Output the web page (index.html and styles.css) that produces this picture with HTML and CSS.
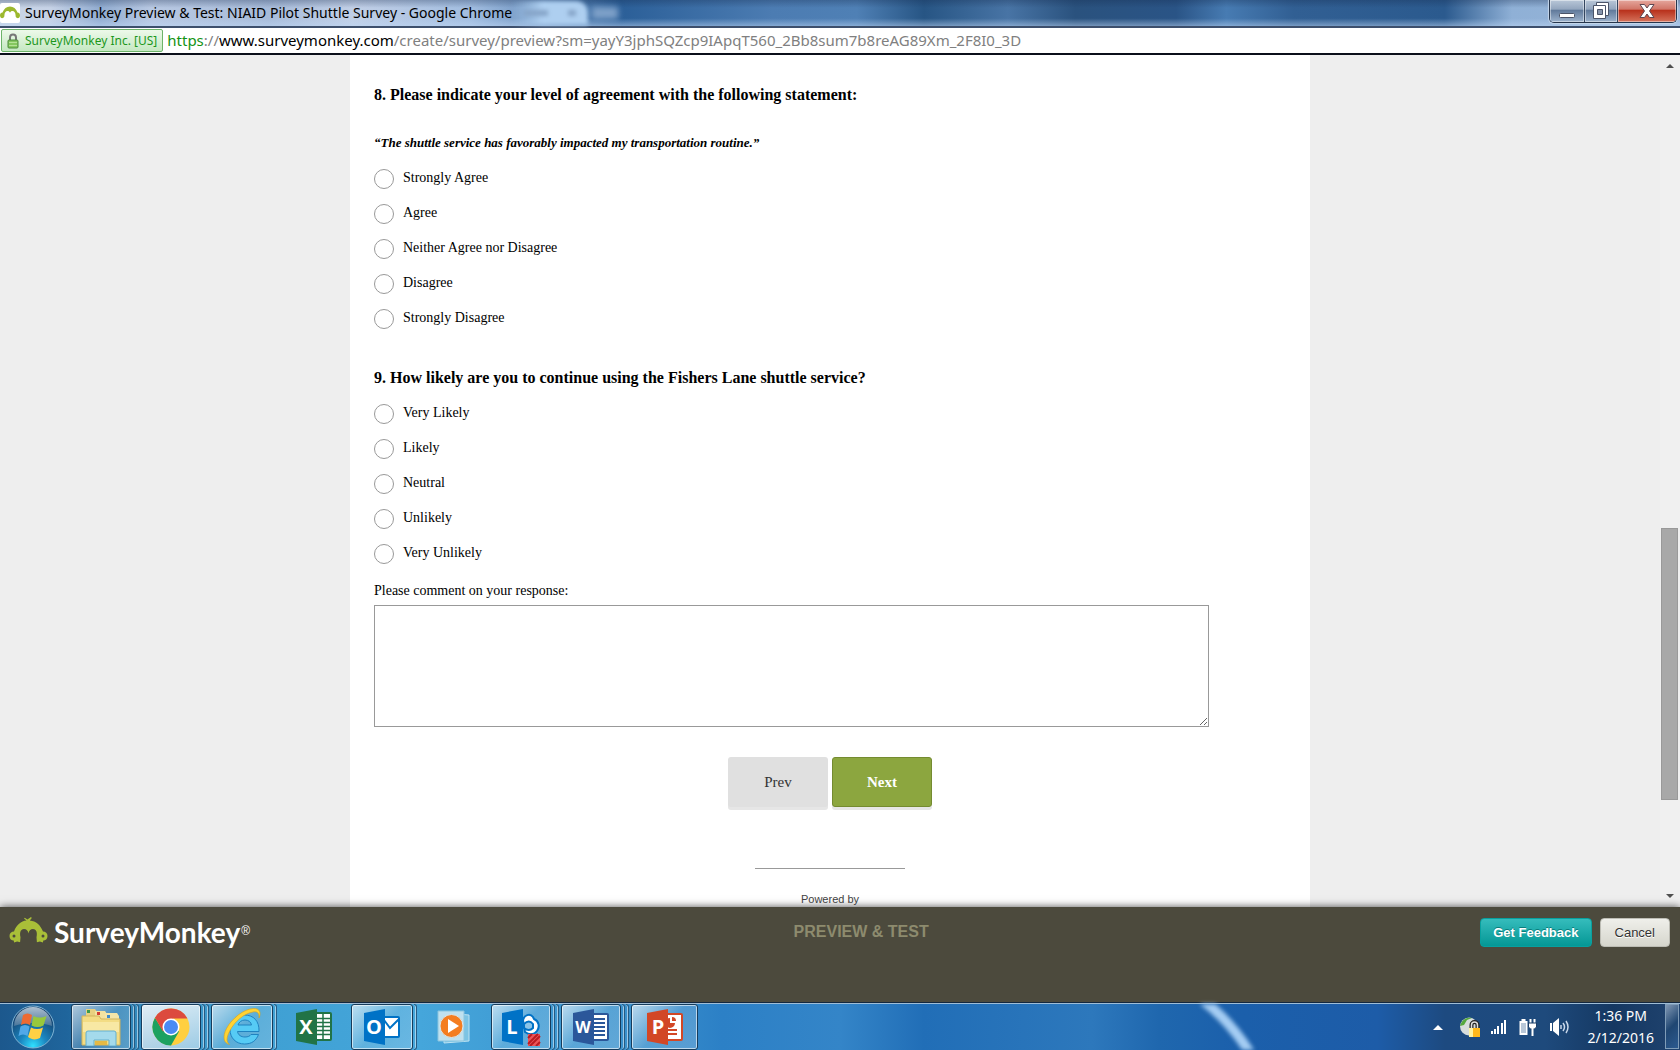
FILE: index.html
```
<!DOCTYPE html>
<html lang="en">
<head>
<meta charset="utf-8">
<title>SurveyMonkey Preview &amp; Test: NIAID Pilot Shuttle Survey</title>
<link rel="stylesheet" href="styles.css">
</head>
<body>

<!-- window title -->
<header class="titlebar">
	<svg class="favicon" width="20" height="20" viewBox="0 0 20 20"><rect width="20" height="20" rx="2" fill="#fff"/><path d="M0 12.500c0-2 1-3 2.500-3C4 5.500 6.500 3.500 10 3.500s6 2 7.500 6c1.500 0 2.500 1 2.500 3s-1.500 3-3 2.500c-1-.3-1.500-1.500-1.400-2.500C15.500 9.500 14.300 8 12.500 8c-1.300 0-2 .7-2.500 1.700C9.500 8.700 8.800 8 7.500 8 5.700 8 4.500 9.500 4.400 12.500c.1 1-.4 2.200-1.400 2.500-1.500.5-3-.5-3-2.500z" fill="#9cb82e"/></svg>
	<span class="titlebar-text">SurveyMonkey Preview &amp; Test: NIAID Pilot Shuttle Survey - Google Chrome</span>
	<div class="glass-tab"><i></i><i></i></div>
	<div class="glass-newtab"></div>
	<div class="window-buttons">
		<button class="win-btn win-min" aria-label="Minimize"><svg width="18" height="22" viewBox="0 0 18 22"><rect x="1.500" y="13.500" width="15" height="4" rx="1" fill="#fff" stroke="#4b5468"/></svg></button>
		<button class="win-btn win-max" aria-label="Restore"><svg width="20" height="22" viewBox="0 0 20 22"><path d="M5.500 2.500h12v13h-12z" fill="#fff" stroke="#4b5468"/><path d="M2.500 5.500h12v13h-12z" fill="#fff" stroke="#4b5468"/><path d="M6.500 9.500h5v5h-5z" fill="#8593aa" stroke="#4b5468"/></svg></button>
		<button class="win-btn win-close" aria-label="Close"><svg width="18" height="22" viewBox="0 0 18 22"><path d="M2 4.500h4.500L9 8l2.500-3.500H16L11.500 11l4.500 6.500h-4.500L9 14l-2.500 3.500H2L6.500 11z" fill="#fff" stroke="#5d4650"/></svg></button>
	</div>
</header>

<!-- address -->
<div class="addressbar">
	<button class="site-chip">
		<svg width="12" height="16" viewBox="0 0 12 16"><path d="M3 8V4.500a3 3 0 0 1 6 0V8" fill="none" stroke="#777" stroke-width="2"/><rect x="1" y="7" width="10" height="8" rx="1" fill="#85c75f" stroke="#4d8a3c"/><path d="M2 9.500h8M2 12.500h8" stroke="#b5e296"/></svg>
		SurveyMonkey Inc. [US]
	</button>
	<a class="url" href="#"><span class="url-scheme">https</span>://<span class="url-host">www.surveymonkey.com</span>/create/survey/preview?sm=yayY3jphSQZcp9IApqT560_2Bb8sum7b8reAG89Xm_2F8I0_3D</a>
</div>

<div class="viewport">
	<main class="survey">
		<form class="survey-page">
			<fieldset class="question">
				<legend class="question-title">8. Please indicate your level of agreement with the following statement:</legend>
				<p class="question-quote">“The shuttle service has favorably impacted my transportation routine.”</p>
				<div class="options">
					<label class="option"><input type="radio" name="q8"><span>Strongly Agree</span></label>
					<label class="option"><input type="radio" name="q8"><span>Agree</span></label>
					<label class="option"><input type="radio" name="q8"><span>Neither Agree nor Disagree</span></label>
					<label class="option"><input type="radio" name="q8"><span>Disagree</span></label>
					<label class="option"><input type="radio" name="q8"><span>Strongly Disagree</span></label>
				</div>
			</fieldset>
			<fieldset class="question">
				<legend class="question-title">9. How likely are you to continue using the Fishers Lane shuttle service?</legend>
				<div class="options">
					<label class="option"><input type="radio" name="q9"><span>Very Likely</span></label>
					<label class="option"><input type="radio" name="q9"><span>Likely</span></label>
					<label class="option"><input type="radio" name="q9"><span>Neutral</span></label>
					<label class="option"><input type="radio" name="q9"><span>Unlikely</span></label>
					<label class="option"><input type="radio" name="q9"><span>Very Unlikely</span></label>
				</div>
				<label class="comment-label" for="q9-comment">Please comment on your response:</label>
				<textarea class="comment" id="q9-comment"></textarea>
			</fieldset>
			<div class="survey-nav">
				<button type="button" class="btn-prev">Prev</button>
				<button type="button" class="btn-next">Next</button>
			</div>
			<footer class="powered">Powered by</footer>
		</form>
	</main>
	<div class="scrollbar">
		<svg width="8" height="4" viewBox="0 0 8 4"><path d="M0 4l4-4 4 4z" fill="#505050"/></svg>
		<div class="scrollbar-track"><div class="scrollbar-thumb"></div></div>
		<svg width="8" height="4" viewBox="0 0 8 4"><path d="M0 0l4 4 4-4z" fill="#505050"/></svg>
	</div>
</div>

<section class="preview-bar">
	<a class="logo" href="#">
		<svg width="39" height="27" viewBox="0 0 39 27"><path d="M.5 19c0-3 2-4.600 4.500-4.600C7.500 8 12 4 17.500 3.500L15 1.500l.8-.8 2.600 1.800L22 0l.8 1-2 2.400C27 4 31.500 8 34 14.400c2.500 0 4.500 1.600 4.500 4.600s-2 4.600-4.200 4.600l-.4 1.900-3-1-3 .8-.4-5c1.300-5.500-.7-8.300-3.500-8.300-2.500 0-4 1.500-4.500 4.500-.5-3-2-4.500-4.500-4.500-2.800 0-4.800 2.800-3.500 8.300l-.4 5-3-.8-3 1-.4-1.900C2.500 23.600.5 22 .5 19z" fill="#a9bf38"/><circle cx="5" cy="19" r="1.500" fill="#4c4a3d"/><circle cx="34" cy="19" r="1.500" fill="#4c4a3d"/></svg>
		<span class="logo-text">SurveyMonkey</span><sup class="logo-reg">®</sup>
	</a>
	<h1 class="preview-title">PREVIEW &amp; TEST</h1>
	<div class="preview-actions">
		<button class="btn-feedback">Get Feedback</button>
		<button class="btn-cancel">Cancel</button>
	</div>
</section>

<!-- taskbar -->
<nav class="taskbar">
	<button class="start" aria-label="Start">
		<svg width="44" height="44" viewBox="0 0 44 44">
			<defs>
				<radialGradient id="orb" cx=".5" cy=".95" r=".8"><stop offset="0" stop-color="#2fe0ff"/><stop offset=".4" stop-color="#1b86c0"/><stop offset="1" stop-color="#143f6c"/></radialGradient>
				<linearGradient id="gloss" x2="0" y2="1"><stop offset="0" stop-color="#d4e0ea"/><stop offset="1" stop-color="#557d9f"/></linearGradient>
			</defs>
			<circle cx="22" cy="22" r="21" fill="url(#orb)" stroke="#7fb4d4"/>
			<path d="M3 21a19 19 0 0 1 38 0C30 17 14 17 3 21z" fill="url(#gloss)" opacity=".8"/>
			<path d="M12 10c3-2 6-2 9 0l-2 10c-3-2-6-2-9 0z" fill="#ee6a32"/>
			<path d="M22.500 11c4 2 8 2 13 0l-3 9.500c-4 2-8 2-12 0z" fill="#98c83c"/>
			<path d="M9.500 21.500c3-2 6-2 9 0l-2 9.500c-3-2-6-2-9 0z" fill="#51a8e8"/>
			<path d="M20 22.500c4 2 8 2 12 0l-3 10.500c-4 2-8 2-12-1z" fill="#ffd044"/>
		</svg>
	</button>
	<ul class="tasks">
		<li class="task stacked">
			<button aria-label="Windows Explorer"><svg width="40" height="38" viewBox="0 0 40 38"><path d="M5 5V1h9l2 3v6H5z" fill="#e8d080"/><path d="M6 2h3v3H6z" fill="#3c9a4a"/><path d="M14 7V3h10l2 3v6H14z" fill="#f2e2a0"/><path d="M16 4h3v3h-3z" fill="#d43c32"/><path d="M24 9V5h12l2 3v4H24z" fill="#f5e6a8"/><path d="M26 7h3v3h-3z" fill="#3e8ac8"/><path d="M1 8h17l2 3h19v26H1z" fill="#f3dc84" stroke="#d1b45c"/><path d="M2 14h36v10H2z" fill="#faedb2" opacity=".7"/><path d="M5 38V25q0-2 2-2h26q2 0 2 2v13h-7v-6H13v6z" fill="#a4daec" stroke="#64b0ce"/><path d="M14 33h12v4H14z" fill="#e5b944"/></svg></button><i></i><i></i>
		</li>
		<li class="task stacked task-active">
			<button aria-label="Google Chrome"><svg width="38" height="38" viewBox="0 0 38 38"><circle cx="19" cy="19" r="18.500" fill="#ffcf3f"/><path d="M19 19L3 9.700A18.500 18.500 0 0 1 35.400 10.500H19z" fill="#dc4a3e"/><path d="M3 9.700A18.500 18.500 0 0 0 19 37.500l8-14L19 19l-8 4z" fill="#1ba160"/><path d="M3 9.700l8 13.800L19 19l2-8.500L8 8z" fill="#dc4a3e"/><circle cx="19" cy="19" r="8.500" fill="#fff"/><circle cx="19" cy="19" r="7" fill="#4a8af4"/></svg></button><i></i><i></i>
		</li>
		<li class="task stacked-one">
			<button aria-label="Internet Explorer"><svg width="40" height="40" viewBox="0 0 40 40"><path d="M37 24.500H15.500c.5 3.500 3.500 5.500 7.500 5.500 3 0 5-1 6-2.500h7.500C34 34 29.500 37 22.500 37 14 37 8 31 8 22.500S14 8 22.500 8C31.500 8 37.500 14 37 24.500zM29.500 18c-.5-3-3-5-6.500-5s-6 2-7 5z" fill="#56cbf5" stroke="#1f83c0"/><path d="M7.500 37.500C2 36.500 0 30 4.500 21.500 10 11 22 2 31.500 1.500c6-.3 8 4 5.500 9.500C37.500 6 35 4 31 5 22 6.500 12 15 7.500 24.500c-3 6-3.500 10.500 0 13z" fill="#ffd333" stroke="#d7a11c" stroke-width=".6"/></svg></button><i></i>
		</li>
		<li class="task task-idle">
			<button aria-label="Excel"><svg width="38" height="38" viewBox="0 0 38 38"><path d="M17 4h18q2 0 2 2v25q0 2-2 2H17z" fill="#217346"/><path d="M21 6h14v25H21z" fill="#fff"/><path d="M21 10.500h14M21 14.500h14M21 18.500h14M21 22.500h14M21 26.500h14M28 6v25" stroke="#217346" stroke-width="1.500"/><path d="M1 5l21-4v36L1 33z" fill="#217346"/><text x="11" y="26" text-anchor="middle" class="app-letter">X</text></svg></button>
		</li>
		<li class="task stacked-one">
			<button aria-label="Outlook"><svg width="38" height="38" viewBox="0 0 38 38"><path d="M18 8h17q2 0 2 2v18q0 2-2 2H18z" fill="#0072c6"/><path d="M21 10h14v18H21z" fill="#fff"/><path d="M21 12l6 8 9-9" fill="none" stroke="#0072c6" stroke-width="2"/><path d="M1 5l21-4v36L1 33z" fill="#0072c6"/><text x="11" y="26" text-anchor="middle" class="app-letter">O</text></svg></button><i></i>
		</li>
		<li class="task task-idle">
			<button aria-label="Windows Media Player"><svg width="36" height="36" viewBox="0 0 36 36"><path d="M8 4l25 2v26l-25 2z" fill="#7cc4e4" stroke="#bde3f3"/><path d="M2 2h26v30H2z" fill="#bfe1ef" stroke="#8ac5df"/><circle cx="15.500" cy="17" r="11.500" fill="#f47d20" stroke="#d8e8ee"/><path d="M12 10l11 7-11 7z" fill="#fff"/></svg></button>
		</li>
		<li class="task stacked">
			<button aria-label="Lync"><svg width="40" height="38" viewBox="0 0 40 38"><path d="M22 12c1-5 7-7 10-3l1 2c5 2 6 8 3 12-3 4-8 4-12 1z" fill="#fff" stroke="#0072c6" stroke-width="2"/><path d="M23 16q5-5 9 0v4q-4 4-9 0z" fill="#8ac4e8" stroke="#0072c6" stroke-width="2"/><path d="M1 5l21-4v36L1 33z" fill="#0072c6"/><text x="11" y="26" text-anchor="middle" class="app-letter">L</text><path d="M27 26h12v12H27z" fill="#ee5559"/><path d="M27 30l4-4M27 36l10-10M29 38l10-10M35 38l4-4" stroke="#b91b22" stroke-width="2"/></svg></button><i></i><i></i>
		</li>
		<li class="task stacked">
			<button aria-label="Word"><svg width="38" height="38" viewBox="0 0 38 38"><path d="M17 5h18q2 0 2 2v24q0 2-2 2H17z" fill="#2b579a"/><path d="M20 7h15v24H20z" fill="#fff"/><path d="M20 11h13M20 15h13M20 19h13M20 23h13M20 27h13" stroke="#2b579a" stroke-width="2"/><path d="M1 5l21-4v36L1 33z" fill="#2b579a"/><text x="11" y="25" text-anchor="middle" class="app-letter app-letter-wide">W</text></svg></button><i></i><i></i>
		</li>
		<li class="task task-single">
			<button aria-label="PowerPoint"><svg width="38" height="38" viewBox="0 0 38 38"><path d="M17 5h18q2 0 2 2v24q0 2-2 2H17z" fill="#d24726"/><path d="M20 7h15v24H20z" fill="#fff"/><path d="M22 22h9M22 26h9" stroke="#d24726" stroke-width="2"/><path d="M24 10a5 5 0 1 0 5 5h-5z" fill="#d24726"/><path d="M26 9a4 4 0 0 1 4 4h-4z" fill="#d24726"/><path d="M1 5l21-4v36L1 33z" fill="#d24726"/><text x="12" y="26" text-anchor="middle" class="app-letter">P</text></svg></button>
		</li>
	</ul>
	<svg class="streak" width="120" height="46" viewBox="0 0 120 46"><path d="M42-6Q72 16 94 52" fill="none" stroke="#a5cdf3" stroke-width="10"/></svg>
	<div class="tray">
		<svg class="tray-more" width="10" height="6" viewBox="0 0 10 6"><path d="M0 6l5-5 5 5z" fill="#fff"/></svg>
		<svg width="20" height="20" viewBox="0 0 20 20"><circle cx="9" cy="9.500" r="9" fill="#d7dddc"/><path d="M0 9C2 2 7 0 12 1L7 3 4 8z" fill="#55a83e"/><path d="M11.500 12V8a3 3 0 0 1 6 0v4" fill="none" stroke="#222" stroke-width="4"/><path d="M11.500 12V8a3 3 0 0 1 6 0v4" fill="none" stroke="#ddd" stroke-width="1.500"/><path d="M9 11h11v9H9z" fill="#ffb81c"/><path d="M9 11h4v9H9z" fill="#fff2a0"/></svg>
		<svg width="16" height="16" viewBox="0 0 16 16"><path d="M0 12h2v3H0zM3 10h2v5H3zM6 7h2v8H6zM10 4h2v11h-2zM13 1h2v14h-2z" fill="#fff"/></svg>
		<svg width="20" height="20" viewBox="0 0 20 20"><path d="M1.500 4h2V2h4v2h2v14h-8z" fill="#fff"/><path d="M3 6h5v10H3z" fill="#b9c8d8"/><path d="M12.500 2v5M16.500 2v5" stroke="#fff" stroke-width="2"/><path d="M10.500 6h8v4l-2 2h-4l-2-2z" fill="#fff" stroke="#1a3c66"/><path d="M14.500 11v8" stroke="#fff" stroke-width="2"/></svg>
		<svg width="20" height="20" viewBox="0 0 20 20"><path d="M1 6h2v8H1zM4 6l6-5v18l-6-5z" fill="#fff"/><path d="M12 8v4M14 6q3 4 0 8M17 4q4 6 0 12" fill="none" stroke="#c9d8ea" stroke-width="1.500"/></svg>
		<time class="clock" datetime="2016-02-12T13:36">1:36 PM<br>2/12/2016</time>
	</div>
	<button class="show-desktop" aria-label="Show desktop"></button>
</nav>

</body>
</html>
```
FILE: styles.css
```
* { box-sizing: border-box; }
html, body { margin: 0; height: 100%; }
body {
	display: flex;
	flex-direction: column;
	overflow: hidden;
	font: 14px "Liberation Serif", "Times New Roman", serif;
	color: #000;
}
button { padding: 0; border: 0; background: none; font: inherit; cursor: pointer; }
svg { display: block; flex: none; }

/* window title */
.titlebar {
	display: flex;
	align-items: center;
	flex: none;
	height: 28px;
	border-bottom: 2px solid #3d4f6c;
	background:
		linear-gradient(to bottom, rgba(20,40,75,.3), rgba(255,255,255,0) 30%, rgba(255,255,255,0) 70%, rgba(190,215,245,.5)),
		linear-gradient(to right, #c9d5e6 0, #c6d2e6 3%, #91acd0 6%, #b8c8e2 9%, #a7bbd9 16%, #c1cfe6 21%, #a2bde0 28%, #2b5f98 37%, #4c7cb2 46%, #4f80b5 51%, #275584 55%, #4874a5 60%, #2a527e 64%, #2a5486 70%, #477bb2 73%, #315f93 77%, #2b5a8e 86%, #8fb0d6 90%, #9ab6d8 100%);
	font-family: "Noto Sans", "Segoe UI", sans-serif;
}
.favicon { margin-right: 5px; }
.titlebar-text { line-height: 26px; white-space: nowrap; }
.glass-tab {
	display: flex;
	gap: 20px;
	align-items: center;
	height: 24px;
	width: 76px;
	padding-left: 12px;
	border-radius: 0 12px 0 0;
	background: linear-gradient(to right, rgba(174,207,240,0), #aecff0 40%);
	filter: blur(2px);
}
.glass-tab i { width: 24px; height: 6px; background: #86a4c8; }
.glass-tab i + i { width: 8px; }
.glass-newtab { width: 26px; height: 12px; margin-left: 4px; background: #7fa1c9; filter: blur(3px); }
.window-buttons {
	display: flex;
	align-self: flex-start;
	height: 23px;
	margin: 0 3px 0 auto;
	border: 1px solid #26364d;
	border-top: 0;
	border-radius: 0 0 5px 5px;
	overflow: hidden;
	box-shadow: 0 0 1px 1px #c5d6ea;
}
.win-btn {
	display: flex;
	justify-content: center;
	box-shadow: inset 0 0 0 1px rgba(255,255,255,.45);
	background: linear-gradient(#b9c7d8, #93a6be 42%, #60799a 46%, #9db3cd);
}
.win-min { width: 34px; }
.win-max { width: 33px; border-left: 1px solid #33455f; }
.win-close { width: 59px; border-left: 1px solid #33455f; background: linear-gradient(#e5a79d, #d17567 42%, #b8301b 46%, #d5735c); }

/* address */
.addressbar {
	display: flex;
	align-items: center;
	gap: 4px;
	flex: none;
	height: 27px;
	padding-left: 1px;
	border-bottom: 2px solid #0b0f1a;
	background: #fff;
	font-family: "Noto Sans", "Segoe UI", sans-serif;
}
.site-chip {
	display: flex;
	align-items: center;
	gap: 6px;
	height: 23px;
	padding: 0 5px;
	border: 1px solid #6db36a;
	border-radius: 2px;
	background: linear-gradient(#edf9ea, #c5e8c2);
	font-size: 12px;
	color: #1c971c;
}
.url { padding-bottom: 1px; font-size: 15px; line-height: 20px; color: #808080; text-decoration: none; white-space: nowrap; }
.url-scheme { color: #149314; }
.url-host { color: #000; }

/* survey */
.viewport { display: flex; flex: 1; min-height: 0; background: #eee; }
.survey { flex: 1; overflow: hidden; }
.survey-page {
	max-width: 960px;
	height: 100%;
	margin: 0 auto;
	padding: 30px 24px 0;
	background: #fff;
}
.question { min-width: 0; margin: 0 0 30px; padding: 0; border: 0; }
.question-title { padding: 0; font-size: 16px; font-weight: bold; line-height: 20px; }
.question-quote { margin: 28px 0 0; font-size: 13px; font-weight: bold; font-style: italic; line-height: 20px; }
.options { margin: 8px 0 10px; }
.question:first-child .options { margin-bottom: 2px; }
.option { display: flex; align-items: center; gap: 9px; height: 35px; }
.option input {
	appearance: none;
	width: 20px;
	height: 20px;
	margin: 0;
	border: 1px solid #999;
	border-radius: 50%;
	background: #fff;
}
.option span { line-height: 18px; padding-bottom: 2px; }
.comment-label { display: block; line-height: 20px; }
.comment {
	display: block;
	width: 100%;
	max-width: 835px;
	height: 122px;
	margin-top: 4px;
	border: 1px solid #999;
	background: #fff;
}
.survey-nav { display: flex; justify-content: center; gap: 4px; }
.survey-nav button {
	width: 100px;
	height: 50px;
	border-radius: 3px;
	box-shadow: 0 3px 0 #e6e6e6;
	font-size: 15px;
}
.survey-nav .btn-prev { background: #e0e0e0; color: #333; }
.survey-nav .btn-next { border: 1px solid #748b30; background: #8ca63f; font-weight: bold; color: #fff; }
.powered {
	width: 150px;
	margin: 61px auto 0;
	padding-top: 22px;
	border-top: 1px solid #999;
	font: 11px/16px "Liberation Sans", Arial, sans-serif;
	text-align: center;
	color: #444;
}
.scrollbar {
	display: flex;
	flex-direction: column;
	align-items: center;
	width: 20px;
	padding: 9px 1px 9px 0;
	background: #f0f0f0;
}
.scrollbar-track { flex: 1; width: 17px; padding: 3px 0; display: flex; flex-direction: column; }
.scrollbar-track:before { content: ""; flex: 458; }
.scrollbar-thumb { flex: 271; border: 1px solid #999; background: #a8a8a8; }
.scrollbar-track:after { content: ""; flex: 91; }

/* preview bar */
.preview-bar {
	position: relative;
	display: flex;
	justify-content: space-between;
	align-items: flex-start;
	flex: none;
	height: 95px;
	padding: 10px 10px 0 9px;
	background: #4c4a3d;
	box-shadow: 0 0 8px rgba(0,0,0,.7);
	font-family: "Liberation Sans", Arial, sans-serif;
}
.logo { display: flex; color: #fff; text-decoration: none; }
.logo-text { margin-left: 6px; font: bold 28px/30px Lato, sans-serif; }
.logo-reg { margin-left: 1px; font-size: 12px; line-height: 28px; }
.preview-title { margin: 0 8px 0 0; font-size: 16px; line-height: 30px; color: #8d8b6e; }
.preview-actions { display: flex; gap: 8px; padding-top: 1px; }
.preview-actions button { height: 29px; border-radius: 4px; font-size: 13px; }
.preview-actions .btn-feedback {
	padding: 0 12px;
	border: 1px solid #08a09f;
	background: linear-gradient(#35bcbc, #049795);
	font-weight: bold;
	color: #fff;
	text-shadow: 0 -1px 0 #0b7d7c;
}
.preview-actions .btn-cancel {
	padding: 0 14px;
	border: 1px solid #bdbdb5;
	background: linear-gradient(#efefea, #d6d6cd);
	color: #333;
	text-shadow: 0 1px 0 #fff;
}

/* taskbar */
.taskbar {
	display: flex;
	align-items: center;
	flex: none;
	height: 48px;
	border-top: 1px solid #14283f;
	box-shadow: inset 0 1px 0 #9fbdd6;
	background: linear-gradient(to right, #1c588d 0, #1f659c 4%, #3289bd 8%, #3e9fd2 14%, #45a6db 25%, #3990cc 38%, #2c80c6 43%, #3485c8 50%, #216eb7 55%, #2d78bc 65%, #1f67ae 69%, #1b5fab 74%, #1d5ca8 82%, #1d4a80 86%, #1e4a7c 92%, #153862 96%, #20436f 100%);
	position: relative;
}
.start { width: 44px; margin: 0 16px 0 11px; }
.tasks { display: grid; grid-template-columns: repeat(9, 70px); align-self: stretch; margin: 0; padding: 1px 0 0; list-style: none; }
.task { display: flex; gap: 1px; min-width: 0; }
.task button {
	display: flex;
	align-items: center;
	justify-content: center;
	width: 60px;
	border: 1px solid #163c5c;
	border-radius: 3px;
	background: linear-gradient(135deg, rgba(255,255,255,.65), rgba(255,255,255,.15) 50%, rgba(255,255,255,.2));
	box-shadow: inset 0 0 0 1px rgba(255,255,255,.6);
}
.task i {
	width: 3px;
	border: 1px solid #265a82;
	border-left: 0;
	border-radius: 0 3px 3px 0;
	box-shadow: inset -1px 0 0 rgba(255,255,255,.5);
}
.stacked-one button { width: 62px; }
.task-single button { width: 67px; }
.task-active button { background: linear-gradient(160deg, rgba(255,255,255,.85), rgba(255,255,255,.5)); }
.task-idle button { width: 66px; border-color: transparent; background: none; box-shadow: none; }
.app-letter { font: bold 20px "Open Sans", sans-serif; fill: #fff; }
.app-letter-wide { font-size: 16px; }
.streak { margin-left: 457px; filter: blur(2px); }
.tray { display: flex; align-items: center; margin-left: auto; gap: 11px; color: #fff; }
.tray-more { margin-right: 6px; }
.clock { margin: 0 11px 0 8px; font: 14px/22px "Noto Sans", "Segoe UI", sans-serif; text-align: center; }
.show-desktop {
	align-self: stretch;
	width: 14px;
	margin: 1px 1px 1px 0;
	border: 1px solid #7f9cb8;
	background: linear-gradient(135deg, #8097b3, #1f4672 50%, #2c5a90);
}
```
